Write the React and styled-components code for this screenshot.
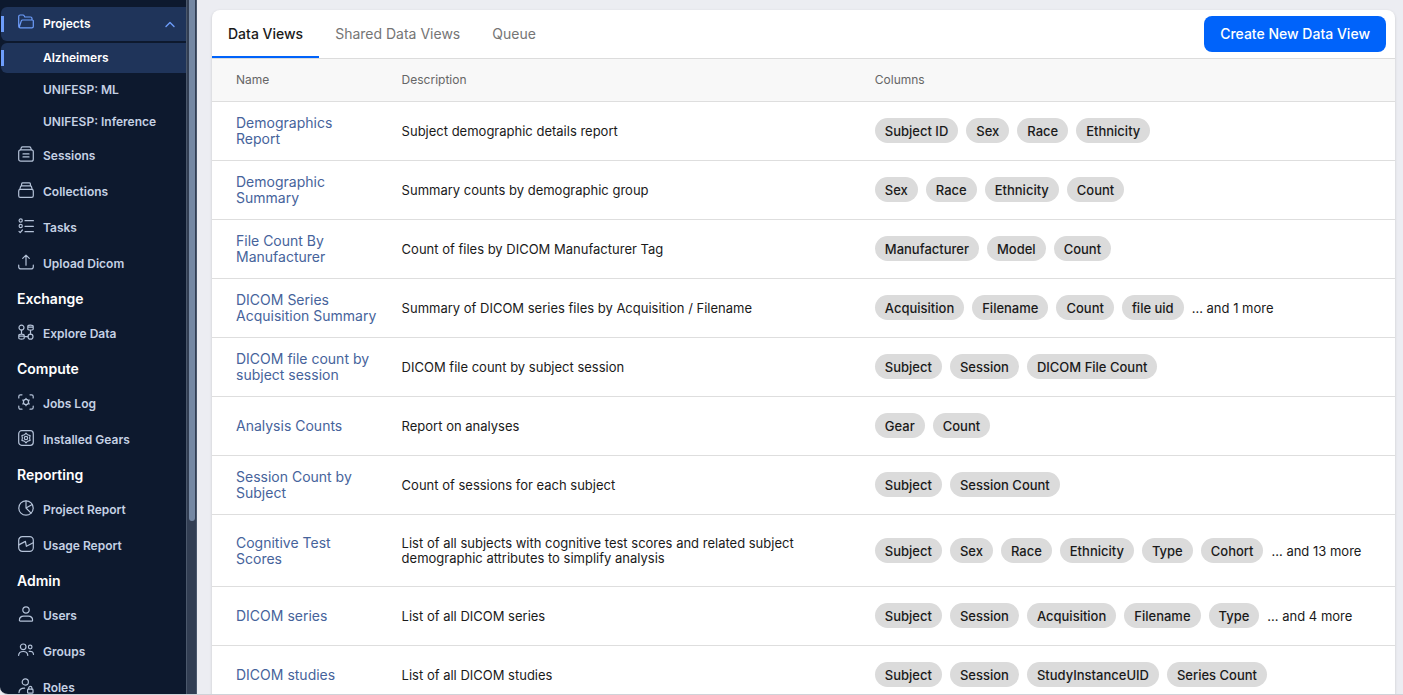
import React from 'react'
import styled, {createGlobalStyle, css} from 'styled-components'

const GlobalStyle = createGlobalStyle`
    * {
        box-sizing: border-box;
    }
    body {
        margin: 0;
        background: #ecedf2;
        color: #1a1a1a;
        font-family: Inter, "Liberation Sans", sans-serif;
        font-size: 13px;
    }
`;

const Screen = styled.div`
    display: flex;
    height: 100vh;
    overflow: hidden;
    border-bottom: 1px solid #d0d2d8;
    border-bottom-left-radius: 8px;
`;

const Sidebar = styled.aside`
    display: flex;
    flex: none;
    width: 197px;
    overflow: hidden;
    background: #0d192e;
`;

const Nav = styled.nav`
    display: flex;
    flex: 1;
    flex-direction: column;
    gap: 2px;
    padding: 7px 0 0 1px;
`;

const activeItem = css`
    background: linear-gradient(#6d9dfa, #6d9dfa) 0 50% / 3px 16px no-repeat, #1f345a;
    border-radius: 6px 0 0 6px;
    color: #ffffff;
`;

const NavItem = styled.a`
    display: flex;
    flex: none;
    align-items: center;
    gap: 9px;
    height: 34px;
    padding: 0 10px 0 17px;
    color: #c5d1e4;
    font-size: 12px;
    font-weight: 600;
    line-height: 16px;
    text-decoration: none;
    ${props => props.$active && activeItem}
`;

const SubItem = styled(NavItem)`
    height: 30px;
    padding-left: 42px;
`;

const NavHeading = styled.h2`
    flex: none;
    margin: 0;
    padding-left: 16px;
    color: #ffffff;
    font-size: 14px;
    font-weight: 600;
    line-height: 32px;
`;

const Icon = styled.svg`
    flex: none;
    width: 16px;
    height: 16px;
    margin-bottom: 4px;
    overflow: visible;
    fill: none;
    stroke: ${props => props.$active ? '#6d9dfa' : '#b4c2d8'};
    stroke-width: 1.2;
    stroke-linecap: round;
    stroke-linejoin: round;
`;

const Chevron = styled(Icon)`
    width: 12px;
    height: 12px;
    margin: 0 0 0 auto;
    stroke-width: 1.4;
`;

const ScrollTrack = styled.div`
    flex: none;
    width: 11px;
    padding: 0 1px 0 2px;
    background: #323e53;
    border: solid #4b586c;
    border-width: 0 1px;
`;

const ScrollThumb = styled.div`
    width: 6px;
    height: 75%;
    background: #7588a3;
    border-radius: 0 0 3px 3px;
`;

const Main = styled.main`
    flex: 1;
    min-width: 0;
    padding: 10px 8px 0 15px;
`;

const Card = styled.section`
    overflow: hidden;
    background: #ffffff;
    border-radius: 8px 8px 0 0;
    box-shadow: 0 1px 3px rgba(0, 0, 0, 0.16);
`;

const Toolbar = styled.div`
    display: flex;
    align-items: center;
    justify-content: space-between;
    height: 49px;
    padding-right: 9px;
    border-bottom: 1px solid #dcdcdc;
`;

const Tabs = styled.div`
    display: flex;
    align-self: stretch;
`;

const Tab = styled.button`
    padding: 0 16px;
    background: none;
    border: 0;
    border-bottom: 2px solid ${props => props.$active ? '#0063fa' : 'transparent'};
    color: ${props => props.$active ? '#1a1a1a' : '#757575'};
    font: inherit;
    font-size: 14px;
    font-weight: ${props => props.$active ? 500 : 400};
`;

const PrimaryButton = styled.button`
    height: 36px;
    padding: 0 16px 2px;
    background: #0063fa;
    border: 0;
    border-radius: 8px;
    color: #ffffff;
    font: inherit;
    font-size: 14px;
    font-weight: 500;
`;

const Table = styled.table`
    width: 100%;
    border-collapse: separate;
    border-spacing: 0;
    table-layout: fixed;
`;

const HeadCell = styled.th`
    width: ${props => props.$width};
    height: 43px;
    padding: 0 0 2px 24px;
    background: #f8f8f8;
    border-bottom: 1px solid #dedede;
    color: #666666;
    font-size: 12px;
    font-weight: 400;
    text-align: left;
`;

const Cell = styled.td`
    height: 59px;
    padding: 0 0 0 24px;
    border-bottom: 1px solid #dedede;
    line-height: 15px;
`;

const DescriptionCell = styled(Cell)`
    padding: 21px 0 20px 24px;
`;

const ViewLink = styled.a`
    display: block;
    color: #46639b;
    font-size: 14px;
    line-height: 16px;
    text-decoration: none;
`;

const Chips = styled.div`
    display: flex;
    align-items: center;
    gap: 8px;
    margin-bottom: 1px;
    white-space: nowrap;
`;

const Chip = styled.span`
    padding: 2px 10px 0;
    background: #dbdbdb;
    border-radius: 13px;
    font-weight: 500;
    line-height: 23px;
`;

const More = styled.span`
    padding-top: 2px;
    line-height: 23px;
`;

const icons = {
    projects: <path d="M1.6 13.6A1.5 1.5 0 0 1 .7 12.2V2.6C.7 1.7 1.3 1 2.2 1H5c.6 0 1 .3 1.2.8L6.8 3H12.500c.9 0 1.500.6 1.500 1.500V6M3.300 6.900C3.500 6.300 4 6 4.600 6H14.200c.8 0 1.300.6 1.100 1.400V12.500c0 .8-.6 1.300-1.400 1.300H2.200c-.6 0-1-.5-.8-1z"/>,
    sessions: <g>
        <path d="M2.700 3.700 3.300 1.700C3.500 1.100 3.900.8 4.500.8h7c.6 0 1 .3 1.200.9l.6 2M5 7.900h6M5 10.900h6"/>
        <rect x=".7" y="3.800" width="14.600" height="11.400" rx="2"/>
    </g>,
    collections: <g>
        <path d="M3.400 3.800 3.700 1.700C3.800 1.100 4.200.8 4.700.8h6.600c.5 0 .9.3 1 .9l.3 2.100M1.800 7.300 2.500 4.800c.2-.6.6-1 1.200-1h8.600c.6 0 1 .4 1.200 1l.7 2.500"/>
        <rect x=".7" y="7.300" width="14.600" height="8" rx="1.600"/>
    </g>,
    tasks: <g>
        <circle cx="2.700" cy="2.500" r="1.600"/>
        <circle cx="2.700" cy="8" r="1.600"/>
        <path d="M1 13.400 2.200 14.600 4.400 12M7 2.700h8.400M7 8.300h8.400M7 13.700h8.400"/>
    </g>,
    upload: <path d="M8 11.200V1.200M4.700 4.400 8 1.100l3.300 3.300M.7 11v1.700c0 1.300.9 2.200 2.200 2.200h10.200c1.300 0 2.200-.9 2.200-2.200V11"/>,
    explore: <g>
        <circle cx="3.500" cy="3.600" r="2.500"/>
        <circle cx="12.500" cy="12.700" r="2.500"/>
        <path d="M3.500 6.100v3.800M12.500 6v4.200M6.300 12.700H10M9.800 2.200c0-1.500 5.400-1.500 5.400 0v2.700c0 1.500-5.400 1.500-5.400 0zM9.900 3.100h5.200M.8 11.200c0-1.500 5.400-1.500 5.400 0v2.700c0 1.500-5.400 1.500-5.400 0zM.9 12.100h5.200"/>
    </g>,
    jobs: <g>
        <path d="M.8 4V2.400C.8 1.500 1.500.8 2.400.8H4M12 .8h1.600c.9 0 1.600.7 1.600 1.600V4M15.200 12v1.600c0 .9-.7 1.600-1.600 1.600H12M4 15.200H2.400c-.9 0-1.600-.7-1.600-1.600V12"/>
        <circle cx="8" cy="8" r="2.600"/>
        <path d="M8 4.300v1M8 10.700v1M4.700 6.100l1 .6M10.300 9.300l1 .6M4.700 9.900l1-.6M10.300 6.700l1-.6"/>
    </g>,
    gears: <g>
        <rect x=".7" y=".7" width="14.600" height="14.600" rx="3"/>
        <path d="M8 3.200 9.600 4.800 12.100 5.600 11.600 8 12.100 10.400 9.600 11.200 8 12.800 6.400 11.200 3.900 10.400 4.400 8 3.900 5.600 6.400 4.800z"/>
        <circle cx="8" cy="8" r="1.700"/>
    </g>,
    project: <g>
        <circle cx="8" cy="8" r="7.200"/>
        <path d="M8 .8V8l6.200-3.600M8 8l5.100 5.100"/>
    </g>,
    usage: <g>
        <rect x=".7" y=".7" width="14.600" height="14.600" rx="3.600"/>
        <path d="M.8 8.900 7.400 5.400 8.400 10.300 15.200 6.800"/>
    </g>,
    users: <g>
        <circle cx="8" cy="4" r="3.200"/>
        <path d="M1.400 14.200c0-2.400 1.900-4 4.200-4h4.800c2.300 0 4.200 1.600 4.200 4 0 .5-.4.900-.9.900H2.300c-.5 0-.9-.4-.9-.9z"/>
    </g>,
    groups: <g>
        <circle cx="5.200" cy="4.800" r="2.800"/>
        <circle cx="12.200" cy="5" r="1.800"/>
        <path d="M.6 13.400c.2-2.400 2-3.900 4.600-3.900s4.400 1.500 4.600 3.900M11.200 9.400c2.400-.5 4 .7 4.300 2.900"/>
    </g>,
    roles: <g>
        <circle cx="7.300" cy="4" r="3.100"/>
        <path d="M1 14.600c.1-2.800 1.900-4.400 5.600-4.400M10.700 11.200v-1.100c0-2.200 3.200-2.200 3.200 0v1.100"/>
        <rect x="9.600" y="11.200" width="5.400" height="4" rx=".8"/>
    </g>,
};

const sections = [
    {
        items: [
            {icon: 'sessions', label: 'Sessions'},
            {icon: 'collections', label: 'Collections'},
            {icon: 'tasks', label: 'Tasks'},
            {icon: 'upload', label: 'Upload Dicom'},
        ],
    },
    {title: 'Exchange', items: [{icon: 'explore', label: 'Explore Data'}]},
    {
        title: 'Compute',
        items: [
            {icon: 'jobs', label: 'Jobs Log'},
            {icon: 'gears', label: 'Installed Gears'},
        ],
    },
    {
        title: 'Reporting',
        items: [
            {icon: 'project', label: 'Project Report'},
            {icon: 'usage', label: 'Usage Report'},
        ],
    },
    {
        title: 'Admin',
        items: [
            {icon: 'users', label: 'Users'},
            {icon: 'groups', label: 'Groups'},
            {icon: 'roles', label: 'Roles'},
        ],
    },
];

const projects = ['Alzheimers', 'UNIFESP: ML', 'UNIFESP: Inference'];

const tabs = ['Data Views', 'Shared Data Views', 'Queue'];

const dataViews = [
    {name: 'Demographics Report', description: 'Subject demographic details report', columns: ['Subject ID', 'Sex', 'Race', 'Ethnicity']},
    {name: 'Demographic Summary', description: 'Summary counts by demographic group', columns: ['Sex', 'Race', 'Ethnicity', 'Count']},
    {name: 'File Count By Manufacturer', description: 'Count of files by DICOM Manufacturer Tag', columns: ['Manufacturer', 'Model', 'Count']},
    {name: 'DICOM Series Acquisition Summary', description: 'Summary of DICOM series files by Acquisition / Filename', columns: ['Acquisition', 'Filename', 'Count', 'file uid'], more: 1},
    {name: 'DICOM file count by subject session', description: 'DICOM file count by subject session', columns: ['Subject', 'Session', 'DICOM File Count']},
    {name: 'Analysis Counts', description: 'Report on analyses', columns: ['Gear', 'Count']},
    {name: 'Session Count by Subject', description: 'Count of sessions for each subject', columns: ['Subject', 'Session Count']},
    {name: 'Cognitive Test Scores', description: 'List of all subjects with cognitive test scores and related subject demographic attributes to simplify analysis', columns: ['Subject', 'Sex', 'Race', 'Ethnicity', 'Type', 'Cohort'], more: 13},
    {name: 'DICOM series', description: 'List of all DICOM series', columns: ['Subject', 'Session', 'Acquisition', 'Filename', 'Type'], more: 4},
    {name: 'DICOM studies', description: 'List of all DICOM studies', columns: ['Subject', 'Session', 'StudyInstanceUID', 'Series Count']},
];

function NavIcon({name, active}){
    return <Icon viewBox="0 0 16 16" aria-hidden="true" $active={active}>{icons[name]}</Icon>
}

function SideNav(){
    return(
        <Sidebar>
            <Nav aria-label="Main">
                <NavItem href="#projects" $active>
                    <NavIcon name="projects" active/>
                    Projects
                    <Chevron viewBox="0 0 12 12" aria-hidden="true" $active><path d="M2 8.500 6 4.500l4 4"/></Chevron>
                </NavItem>
                {projects.map((project, i) => (
                    <SubItem key={project} href={"#project-"+i} $active={i === 0}>{project}</SubItem>
                ))}
                {sections.map((section, i) => (
                    <React.Fragment key={i}>
                        {section.title && <NavHeading>{section.title}</NavHeading>}
                        {section.items.map(item => (
                            <NavItem key={item.label} href={"#"+item.icon}>
                                <NavIcon name={item.icon}/>
                                {item.label}
                            </NavItem>
                        ))}
                    </React.Fragment>
                ))}
            </Nav>
            <ScrollTrack aria-hidden="true"><ScrollThumb/></ScrollTrack>
        </Sidebar>
    )
}

function DataViewRow({view}){
    return(
        <tr>
            <Cell><ViewLink href="#view">{view.name}</ViewLink></Cell>
            <DescriptionCell>{view.description}</DescriptionCell>
            <Cell>
                <Chips>
                    {view.columns.map(column => <Chip key={column}>{column}</Chip>)}
                    {view.more && <More>... and {view.more} more</More>}
                </Chips>
            </Cell>
        </tr>
    )
}

class App extends React.Component{

    constructor(props){
        super(props);
        this.state = {
            activeTab: tabs[0],
        };
    }

    render(){
        return(
            <Screen>
                <GlobalStyle/>
                <SideNav/>
                <Main>
                    <Card>
                        <Toolbar>
                            <Tabs role="tablist">
                                {tabs.map(tab => (
                                    <Tab
                                        key={tab}
                                        type="button"
                                        role="tab"
                                        aria-selected={tab === this.state.activeTab}
                                        $active={tab === this.state.activeTab}
                                        onClick={() => this.setState({activeTab: tab})}
                                    >
                                        {tab}
                                    </Tab>
                                ))}
                            </Tabs>
                            <PrimaryButton type="button">Create New Data View</PrimaryButton>
                        </Toolbar>
                        <Table>
                            <thead>
                            <tr>
                                <HeadCell $width="14%">Name</HeadCell>
                                <HeadCell $width="40%">Description</HeadCell>
                                <HeadCell $width="46%">Columns</HeadCell>
                            </tr>
                            </thead>
                            <tbody>
                            {dataViews.map(view => <DataViewRow key={view.name} view={view}/>)}
                            </tbody>
                        </Table>
                    </Card>
                </Main>
            </Screen>
        )
    }
}

export default App
